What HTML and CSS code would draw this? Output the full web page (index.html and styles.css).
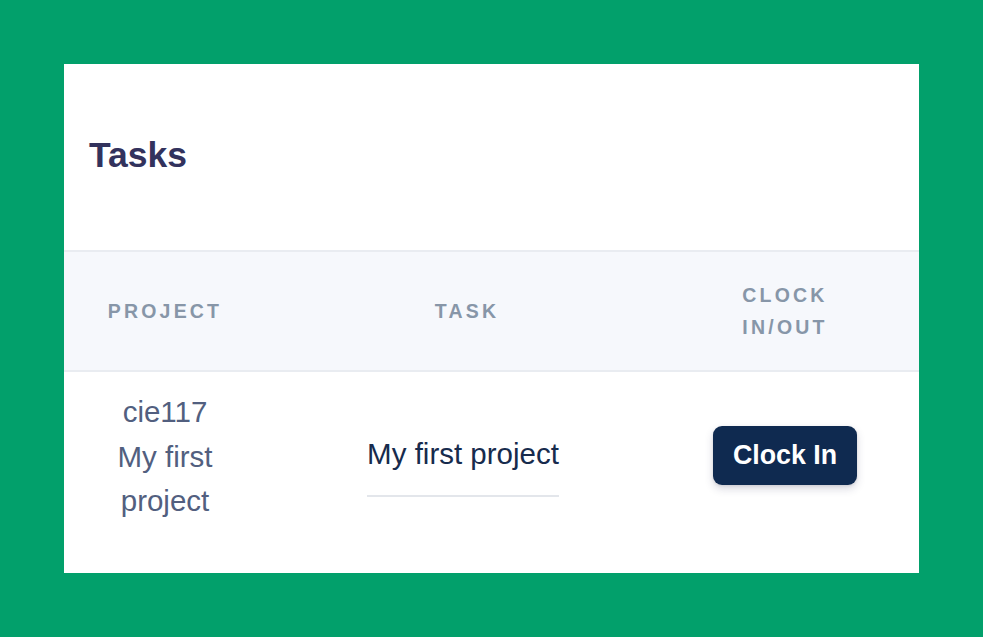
FILE: index.html
```html
<!DOCTYPE html>
<html lang="en">
<head>
<meta charset="utf-8">
<title>Tasks</title>
<link rel="stylesheet" href="styles.css">
</head>
<body>
<div class="stage">
  <section class="card">
    <header class="card-header">
      <h3 class="title">Tasks</h3>
    </header>
    <div class="table">
      <div class="row head">
        <div class="th">Project</div>
        <div class="th">Task</div>
        <div class="th th-clock">Clock in/out</div>
      </div>
      <div class="row body">
        <div class="td project">cie117<br>My first<br>project</div>
        <div class="td"><span class="task">My first project</span></div>
        <div class="td"><button class="btn">Clock In</button></div>
      </div>
    </div>
  </section>
</div>
</body>
</html>
```

FILE: styles.css
```css
* { box-sizing: border-box; }
html, body { margin: 0; padding: 0; }
body {
  background: #02a06b;
  font-family: "Liberation Sans", Arial, Helvetica, sans-serif;
  width: 983px;
  height: 637px;
  overflow: hidden;
}
.stage {
  padding: 64px;
}
.card {
  background: #ffffff;
  width: 855px;
  height: 509px;
  overflow: hidden;
}
.card-header {
  height: 186px;
  display: flex;
  align-items: center;
  padding: 0 25px 3px;
}
.title {
  margin: 0;
  font-size: 35.5px;
  font-weight: 700;
  color: #32325d;
}
.row {
  display: grid;
  grid-template-columns: 202px 402px 234px 1fr;
  align-items: center;
}
.head {
  background: #f6f8fc;
  border-top: 2px solid #e9ecf1;
  border-bottom: 2px solid #e9ecf1;
  height: 122px;
}
.th {
  text-align: center;
  text-transform: uppercase;
  font-size: 19.5px;
  font-weight: 700;
  letter-spacing: 3.2px;
  color: #8796a8;
  line-height: 32px;
}
.th-clock {
  padding: 0 58px;
}
.body {
  padding: 18px 0 49px;
}
.td {
  text-align: center;
  font-size: 29.5px;
  line-height: 44.5px;
}
.project {
  color: #525f7f;
}
.task {
  display: inline-block;
  color: #172b4d;
  padding: 15px 0 18px;
  margin-right: 8px;
  border-bottom: 2px solid #e3e6eb;
}
.btn {
  font-family: inherit;
  font-size: 26.8px;
  font-weight: 700;
  color: #ffffff;
  background: #0f2a50;
  border: none;
  border-radius: 9px;
  width: 144px;
  height: 59px;
  padding: 0;
  margin-top: -2px;
  box-shadow: 0 4px 8px rgba(50, 50, 93, 0.18), 0 1px 3px rgba(0, 0, 0, 0.1);
}
```
